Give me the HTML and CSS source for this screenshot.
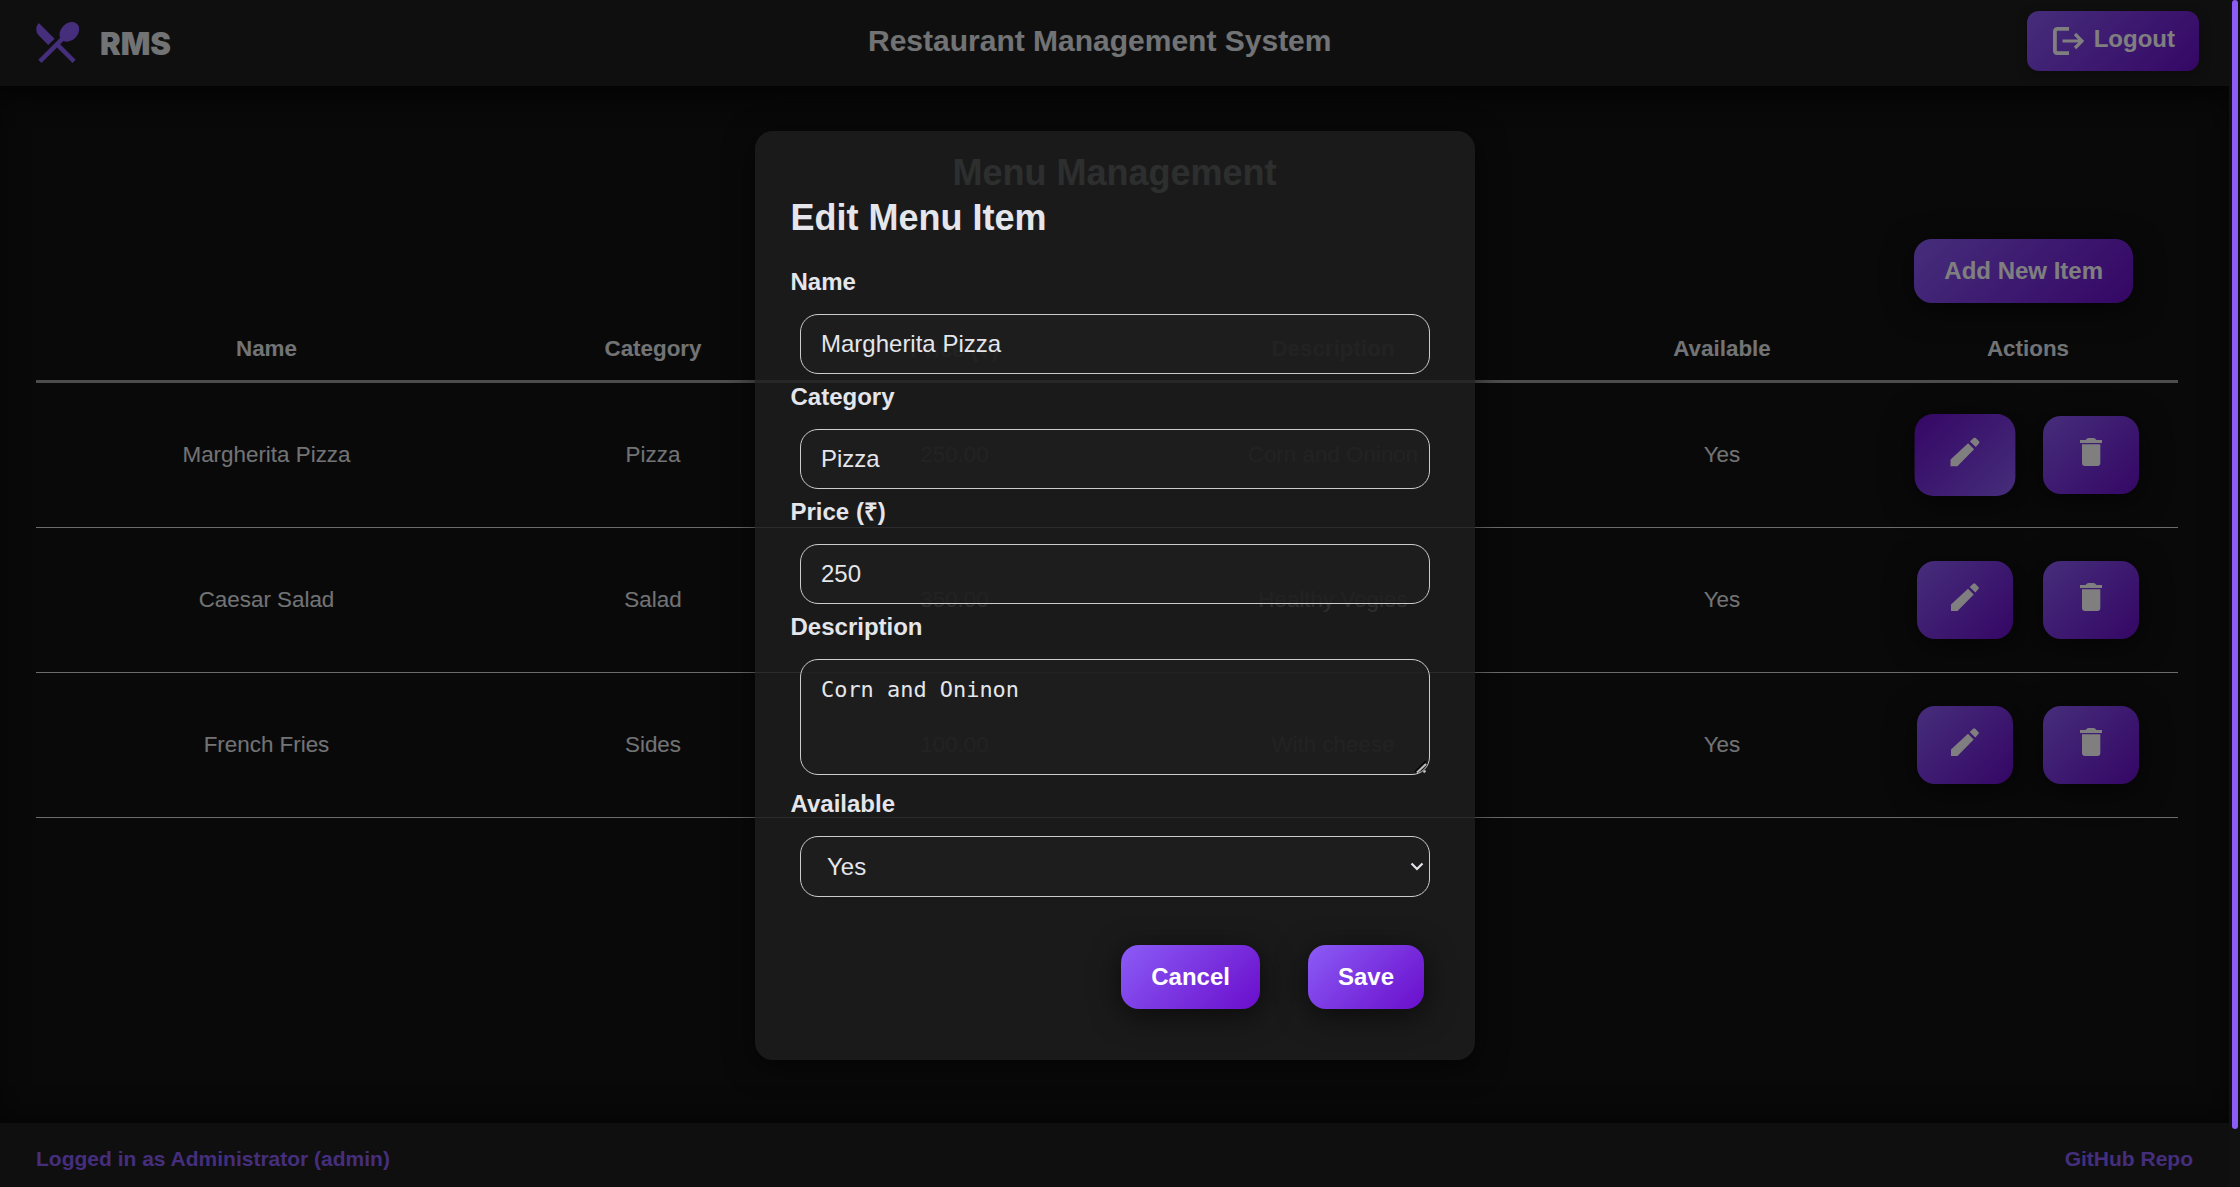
FILE: index.html
```html
<!DOCTYPE html>
<html lang="en">
<head>
<meta charset="utf-8">
<title>Restaurant Management System</title>
<link rel="stylesheet" href="styles.css">
</head>
<body>
<svg class="defs" aria-hidden="true">
  <symbol id="edit" viewBox="0 0 28 28"><path d="M0 21.500V28H6.500L22.700 11.500L17 5.800Z"/><path d="M18.700 4.100L22.200.7Q23.200-.2 24.200.7L27.400 3.900Q28.300 4.900 27.400 5.900L24.300 9.500Z"/></symbol>
  <symbol id="trash" viewBox="0 0 22 28"><path d="M0 2H5.500Q7 0 8.500 0h5Q15 0 16.500 2H22V5H0Z"/><path d="M2 6.200H20.300V25Q20.300 28 17.300 28H5Q2 28 2 25Z"/></symbol>
</svg>
<div class="app">
  <div class="page">
    <header class="header">
      <div class="brand">
        <svg class="logo" viewBox="0 0 24 24"><path d="M8.100 13.340l2.830-2.830L3.910 3.500a4.008 4.008 0 0 0 0 5.660l4.190 4.180zM14.880 11.530c1.530.710 3.680.210 5.270-1.380 1.910-1.910 2.280-4.650.810-6.120-1.460-1.460-4.200-1.100-6.120.810-1.590 1.590-2.090 3.740-1.380 5.270L3.700 19.870l1.410 1.410L12 14.410l6.880 6.880 1.410-1.410L13.410 13l1.470-1.470z"/></svg>
        <span class="brand-name">RMS</span>
      </div>
      <h1 class="app-title">Restaurant Management System</h1>
      <button class="btn logout"><svg class="logout-icon" viewBox="0 0 31 28"><path class="door" d="M16 1.900H4.500Q1.900 1.900 1.900 4.500v19Q1.900 26.100 4.500 26.100H16"/><path class="arrow" d="M9.500 14H29M22 7l7 7-7 7"/></svg>Logout</button>
    </header>
    <main class="main">
      <h2 class="page-title">Menu Management</h2>
      <div class="toolbar"><button class="btn">Add New Item</button></div>
      <table class="table">
        <colgroup><col class="c-name"><col class="c-cat"><col class="c-price"><col class="c-desc"><col class="c-avail"><col class="c-act"></colgroup>
        <thead><tr><th>Name</th><th>Category</th><th>Price (₹)</th><th>Description</th><th>Available</th><th>Actions</th></tr></thead>
        <tbody>
          <tr><td>Margherita Pizza</td><td>Pizza</td><td>250.00</td><td>Corn and Oninon</td><td>Yes</td><td><div class="actions"><button class="btn icon-btn active"><svg class="edit"><use href="#edit"/></svg></button><button class="btn icon-btn"><svg class="trash"><use href="#trash"/></svg></button></div></td></tr>
          <tr><td>Caesar Salad</td><td>Salad</td><td>350.00</td><td>Healthy Vegies</td><td>Yes</td><td><div class="actions"><button class="btn icon-btn"><svg class="edit"><use href="#edit"/></svg></button><button class="btn icon-btn"><svg class="trash"><use href="#trash"/></svg></button></div></td></tr>
          <tr><td>French Fries</td><td>Sides</td><td>100.00</td><td>With cheese</td><td>Yes</td><td><div class="actions"><button class="btn icon-btn"><svg class="edit"><use href="#edit"/></svg></button><button class="btn icon-btn"><svg class="trash"><use href="#trash"/></svg></button></div></td></tr>
        </tbody>
      </table>
    </main>
    <footer class="footer"><span>Logged in as Administrator (admin)</span><span>GitHub Repo</span></footer>
  </div>
  <div class="scroll-track"><div class="scroll-thumb"></div></div>
</div>
<div class="overlay">
  <form class="modal">
    <h2 class="modal-title">Edit Menu Item</h2>
    <label class="label">Name</label>
    <input class="field" value="Margherita Pizza">
    <label class="label">Category</label>
    <input class="field" value="Pizza">
    <label class="label">Price (₹)</label>
    <input class="field" value="250">
    <label class="label">Description</label>
    <div class="area-wrap">
      <textarea class="field area" spellcheck="false">Corn and Oninon</textarea>
      <svg class="grip" viewBox="0 0 14 14"><path class="grip-dark" d="M1 12L12 1"/><path class="grip-light" d="M3 12.500L12 4M9.500 12.500l2-2"/></svg>
    </div>
    <label class="label">Available</label>
    <div class="field select"><span>Yes</span><svg class="chevron" viewBox="0 0 14 9"><path d="M1.500 1.500L7 7l5.500-5.500"/></svg></div>
    <div class="modal-actions"><button type="button" class="btn">Cancel</button><button type="button" class="btn">Save</button></div>
  </form>
</div>
</body>
</html>
```
FILE: styles.css
```css
* { box-sizing: border-box; }
body {
  margin: 0;
  background: #121212;
  color: #e4e6eb;
  font-family: "Liberation Sans", Arial, sans-serif;
  overflow: hidden;
}
h1, h2 { margin: 0; }
.defs { display: none; }
.app { display: flex; height: 1187px; }
.page { width: 2229px; display: flex; flex-direction: column; }

.header {
  height: 86px;
  display: grid;
  grid-template-columns: 832px 1fr auto;
  align-items: center;
  padding: 0 30px 0 36px;
  background: #1e1e1e;
  box-shadow: 0 6px 30px rgba(0, 0, 0, .7);
}
.brand { display: flex; align-items: center; gap: 16px; }
.logo { width: 54px; height: 54px; margin: 0 0 3px -6px; fill: #8b5cf6; }
.brand-name {
  font-family: "Arial Black", Inter, "Liberation Sans", sans-serif;
  font-size: 31px;
  font-weight: 900;
}
.app-title { font-size: 30px; line-height: 36px; margin-top: -5px; }

.btn {
  height: 64px;
  padding: 0 30px;
  border: 0;
  border-radius: 18px;
  background: linear-gradient(135deg, #8b5cf6, #6a0dcb);
  box-shadow: 0 6px 30px rgba(0, 0, 0, .6);
  color: #fff;
  font: bold 24px "Liberation Sans", Arial, sans-serif;
}
.logout {
  height: 60px;
  margin-bottom: 4px;
  padding: 0 24px 4px 26px;
  border-radius: 12px;
  box-shadow: 0 3px 12px rgba(0, 0, 0, .3);
  display: flex;
  align-items: center;
  gap: 10px;
}
.logout-icon { width: 31px; height: 28px; margin-top: 4px; fill: none; stroke: #fff; }
.door { stroke-width: 3.800; }
.arrow { stroke-width: 3.200; }

.main { flex: 1; padding: 66px 51px 0 36px; box-shadow: inset 0 0 30px rgba(0, 0, 0, .4); }
.page-title { font-size: 36px; line-height: 42px; text-align: center; margin-right: -15px; }
.toolbar { display: flex; justify-content: flex-end; padding: 45px 45px 0 0; }
.table { width: 2142px; margin-top: 11px; border-collapse: separate; border-spacing: 0; table-layout: fixed; font-size: 22.400px; }
.c-name { width: 461px; }
.c-cat { width: 312px; }
.c-price { width: 291px; }
.c-desc { width: 466px; }
.c-avail { width: 312px; }
.c-act { width: 300px; }
th { height: 69px; padding: 3px 0 0; border-bottom: 3px solid #9a9a9a; }
td { height: 145px; padding: 0; text-align: center; border-bottom: 1px solid #d8d8d8; }
.actions { display: flex; justify-content: center; gap: 30px; }
.icon-btn { width: 96px; height: 78px; padding: 0 0 6px; display: flex; align-items: center; justify-content: center; }
.icon-btn svg { height: 28px; fill: #fff; overflow: visible; }
.edit { width: 28px; }
.trash { width: 22px; }
.icon-btn.active { transform: scale(1.05); background: linear-gradient(135deg, #6a0dcb, #8b5cf6); }

.footer {
  height: 64px;
  display: flex;
  justify-content: space-between;
  align-items: center;
  padding: 8px 36px 0;
  background: #1e1e1e;
  box-shadow: 0 -6px 30px rgba(0, 0, 0, .3);
  color: #8b5cf6;
  font-size: 21px;
  font-weight: bold;
}
.scroll-track { width: 11px; padding-left: 3px; background: #222; }
.scroll-thumb { position: relative; z-index: 3; width: 6px; height: 1129px; border-radius: 3px; background: #8b5cf6; }

.overlay {
  position: absolute;
  inset: 0;
  z-index: 2;
  padding: 131px 0 0 755px;
  background: rgba(0, 0, 0, .5);
}
.modal {
  width: 720px;
  height: 929px;
  padding: 64px 36px 0 35.500px;
  border-radius: 18px;
  background: rgba(31, 31, 31, .82);
  box-shadow: 0 6px 30px rgba(0, 0, 0, .6);
}
.modal-title { font-size: 36px; line-height: 46px; margin-bottom: 27px; }
.label { display: block; height: 28px; font-size: 24px; line-height: 28px; font-weight: bold; }
.field {
  display: block;
  width: 630px;
  height: 60px;
  margin: 18px 9px 9px 9.500px;
  padding: 0 20px;
  border: 1px solid #ccc;
  border-radius: 18px;
  background: rgba(31, 31, 31, .75);
  color: #e4e6eb;
  font: 24px "Liberation Sans", Arial, sans-serif;
  outline: 0;
}
.area-wrap { position: relative; }
.area { height: 116px; padding-top: 16px; resize: none; margin-bottom: 15px; font: 21.930px/28px "DejaVu Sans Mono", monospace; }
.grip { position: absolute; right: 11px; bottom: 1px; width: 14px; height: 14px; fill: none; }
.grip-dark { stroke: #000; stroke-width: 1.500; }
.grip-light { stroke: #bbb; stroke-width: 2; }
.select { height: 61px; display: flex; align-items: center; justify-content: space-between; padding: 0 5px 0 26px; }
.chevron { width: 14px; height: 9px; fill: none; stroke: #e4e6eb; stroke-width: 2.200; }
.modal-actions { display: flex; justify-content: flex-end; gap: 48px; padding: 39px 15px 0 0; }
```
